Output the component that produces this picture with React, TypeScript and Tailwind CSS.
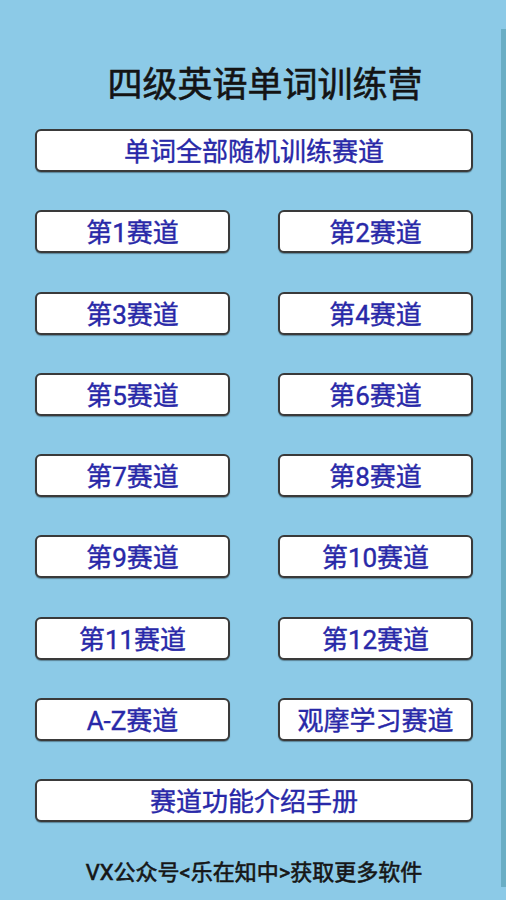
import React from 'react';

const tracks = [
  '第1赛道', '第2赛道',
  '第3赛道', '第4赛道',
  '第5赛道', '第6赛道',
  '第7赛道', '第8赛道',
  '第9赛道', '第10赛道',
  '第11赛道', '第12赛道',
  'A-Z赛道', '观摩学习赛道',
];

const font = { fontFamily: 'Roboto, "Noto Sans CJK SC", sans-serif' };

function TrackButton({ label }: { label: string }) {
  return (
    <button
      className="h-[43px] w-full rounded-[6px] border-2 border-[#3a3a3a] bg-white pt-[3px] text-[26px] leading-none font-normal text-[#2828a8] [-webkit-text-stroke:0.4px_currentColor] shadow-[0_1px_1px_rgba(0,0,0,0.35)] flex items-center justify-center"
    >
      {label}
    </button>
  );
}

export default function App() {
  return (
    <div className="relative w-[506px] h-[900px] bg-[#8ccae7] overflow-hidden" style={font}>
      {/* scrollbar */}
      <div className="absolute right-0 top-[29px] h-[858px] w-[5px] bg-[#6aaec5]" />

      <div className="flex flex-col pl-[35px] pr-[33px]">
        <h1 className="mt-[66px] h-[40px] pl-[22px] text-center text-[35px] leading-[40px] font-normal text-[#141414] [-webkit-text-stroke:0.6px_currentColor]">
          四级英语单词训练营
        </h1>

        <div className="mt-[23px] flex flex-col gap-[38.25px]">
          <TrackButton label="单词全部随机训练赛道" />
          <div className="grid grid-cols-2 gap-x-[48px] gap-y-[38.25px]">
            {tracks.map(t => (
              <TrackButton key={t} label={t} />
            ))}
          </div>
          <TrackButton label="赛道功能介绍手册" />
        </div>

        <p className="mt-[40px] text-center text-[22px] leading-[22px] font-normal text-[#161616] [-webkit-text-stroke:0.6px_currentColor]">
          VX公众号&lt;乐在知中&gt;获取更多软件
        </p>
      </div>
    </div>
  );
}
